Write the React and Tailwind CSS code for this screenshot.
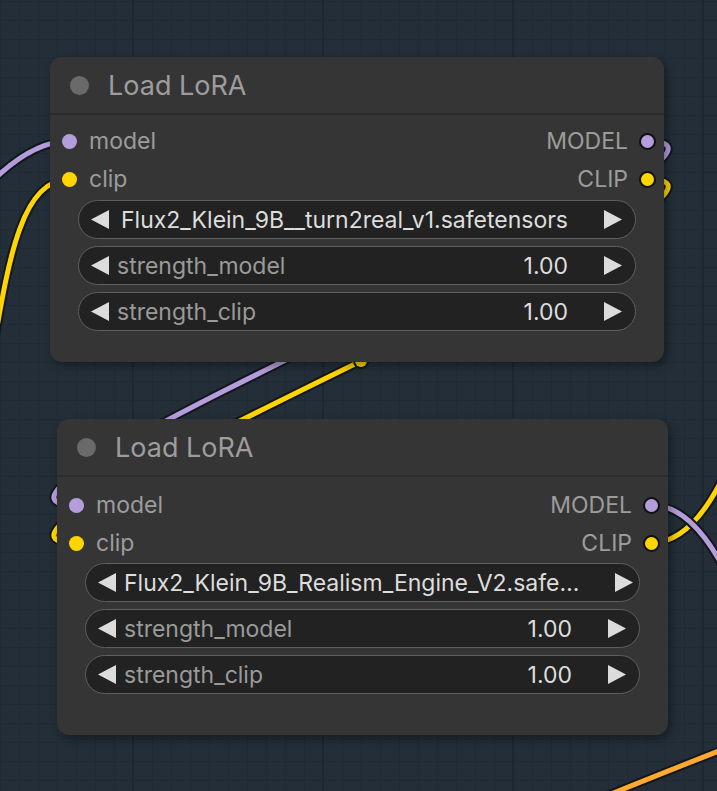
import React from "react";

const FONT = { fontFamily: "Inter, 'Noto Sans', sans-serif" };

// ComfyUI-style link: cubic with horizontal handles at both slots
function linkPath(x1, y1, x2, y2) {
  const d = Math.hypot(x2 - x1, y2 - y1) * 0.25;
  return `M ${x1} ${y1} C ${x1 + d} ${y1}, ${x2 - d} ${y2}, ${x2} ${y2}`;
}

function Wire({ d, color, mid }) {
  return (
    <g>
      <path d={d} fill="none" stroke="#11171c" strokeWidth="9" strokeLinecap="round" />
      <path d={d} fill="none" stroke={color} strokeWidth="5" strokeLinecap="round" />
      {mid && (
        <g>
          <circle cx={mid[0]} cy={mid[1]} r="8" fill="#11171c" />
          <circle cx={mid[0]} cy={mid[1]} r="6" fill={color} />
        </g>
      )}
    </g>
  );
}

function Canvas() {
  const vLines = [];
  for (let x = 0.5; x < 717; x += 19) vLines.push(x);
  const hLines = [];
  for (let y = 1.5; y < 791; y += 19) hLines.push(y);
  const majors = [133, 323, 513, 703];
  return (
    <svg className="absolute inset-0" width="717" height="791" viewBox="0 0 717 791">
      <rect width="717" height="791" fill="#232e38" />
      {vLines.map((x) => (
        <line key={"v" + x} x1={x} y1="0" x2={x} y2="791" stroke="#202a33" strokeWidth="1" />
      ))}
      {hLines.map((y) => (
        <line key={"h" + y} x1="0" y1={y} x2="717" y2={y} stroke="#202a33" strokeWidth="1" />
      ))}
      {majors.map((x) => (
        <line key={"m" + x} x1={x} y1="0" x2={x} y2="791" stroke="#1d272f" strokeWidth="2" />
      ))}

      {/* links into the first loader */}
      <Wire d="M -300 520 C -168 520, -63 141, 69.5 141" color="#b39ddb" />
      <Wire d="M -20 420 C 5 300, 10 180, 69.5 179" color="#ffd500" />

      {/* first loader -> second loader */}
      <Wire d={linkPath(647, 141, 75, 505)} color="#b39ddb" mid={[361, 323]} />
      <Wire d={linkPath(647, 179, 75, 543)} color="#ffd500" mid={[361, 361]} />

      {/* second loader outputs */}
      <Wire d="M 651 543 C 767 543, 780 140, 890 140" color="#ffd500" />
      <Wire d="M 651 505 C 768 505, 783 900, 900 900" color="#b39ddb" />

      {/* unrelated link at the bottom */}
      <Wire d="M 560 815 C 620 790, 680 766, 760 735" color="#ffa931" />
    </svg>
  );
}

function Tri({ dir }) {
  return (
    <svg width="20" height="19" viewBox="0 0 20 19" className="shrink-0">
      {dir === "left" ? (
        <polygon points="19,0 19,19 1,9.5" fill="#dcdcdc" />
      ) : (
        <polygon points="1,0 1,19 19,9.5" fill="#dcdcdc" />
      )}
    </svg>
  );
}

function Widget({ label, value }) {
  return (
    <div className="h-[39px] rounded-full border border-[#5f5f5f] bg-[#222222] flex items-center pl-[11px] pr-[12px] text-[23px] leading-[28px]">
      <Tri dir="left" />
      <span className="ml-[7px] text-[#9a9a9a] whitespace-nowrap">{label}</span>
      <span className="flex-1 text-right mr-[35px] text-[#dddddd] whitespace-nowrap">{value}</span>
      <Tri dir="right" />
    </div>
  );
}

function SlotRow({ input, inColor, output }) {
  return (
    <div className="h-[38px] flex items-center justify-between text-[23px] leading-[28px] text-[#9c9c9c]">
      <div className="flex items-center">
        <span className={`ml-[12px] w-[15px] h-[15px] rounded-full ${inColor}`} />
        <span className="ml-[12px]">{input}</span>
      </div>
      <div className="flex items-center">
        <span>{output}</span>
        <span className={`ml-[11px] mr-[8px] w-[17px] h-[17px] rounded-full border-2 border-[#111111] ${inColor}`} />
      </div>
    </div>
  );
}

function LoraNode({ pos, bodyPad, widgetGap, file }) {
  return (
    <div
      className={`absolute ${pos} rounded-[12px] bg-[#353535] shadow-[3px_4px_8px_rgba(0,0,0,0.35)] flex flex-col`}
    >
      <div className="h-[58px] shrink-0 flex items-center pt-[1px] border-b-2 border-[#2b2b2b]">
        <span className="ml-[20px] w-[19px] h-[19px] rounded-full bg-[#6a6a6a]" />
        <span className="ml-[19px] text-[27px] leading-none text-[#9d9d9d]">Load LoRA</span>
      </div>
      <div className={bodyPad}>
        <SlotRow input="model" inColor="bg-[#b39ddb]" output="MODEL" />
        <SlotRow input="clip" inColor="bg-[#ffd500]" output="CLIP" />
      </div>
      <div className={`${widgetGap} px-[28px] flex flex-col gap-[7px]`}>
        <Widget label="" value={file} />
        <Widget label="strength_model" value="1.00" />
        <Widget label="strength_clip" value="1.00" />
      </div>
    </div>
  );
}

export default function App() {
  return (
    <div className="relative w-[717px] h-[791px] overflow-hidden bg-[#232e38]" style={FONT}>
      <Canvas />
      <LoraNode
        pos="left-[50px] top-[57px] w-[614px] h-[305px]"
        bodyPad="pt-[7px]"
        widgetGap="mt-[2px]"
        file="Flux2_Klein_9B__turn2real_v1.safetensors"
      />
      <LoraNode
        pos="left-[57px] top-[419px] w-[611px] h-[316px]"
        bodyPad="pt-[9px]"
        widgetGap="mt-[1px]"
        file="Flux2_Klein_9B_Realism_Engine_V2.safe…"
      />
    </div>
  );
}
